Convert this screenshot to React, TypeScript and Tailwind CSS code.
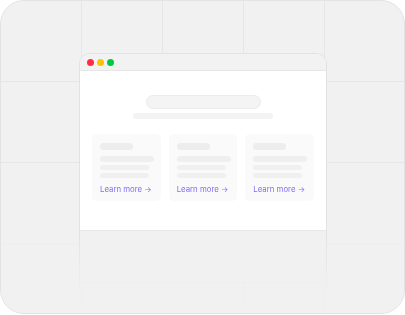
import React from "react";

const cells = Array.from({ length: 20 });

function Card() {
  return (
    <div className="flex h-[67px] flex-col rounded-[5px] bg-[#fafafa] px-[8px] pt-[9px]">
      <div className="h-[7px] w-[33px] rounded-full bg-[#ededed]" />
      <div className="mt-[6px] h-[6px] w-[54px] rounded-full bg-[#efefef]" />
      <div className="mt-[3px] h-[5px] w-[49px] rounded-full bg-[#f0f0f0]" />
      <div className="mt-[3px] h-[5px] w-[49px] rounded-full bg-[#f0f0f0]" />
      <div className="mt-[6px] whitespace-nowrap text-[7.8px] leading-[10px] text-[#7f6ff5] [font-family:Inter,'Noto_Sans',sans-serif]">
        Learn more →
      </div>
    </div>
  );
}

export default function App() {
  return (
    <div className="h-[315px] w-[405px] bg-white">
      <div className="relative h-[314px] w-[405px] overflow-hidden rounded-[24px] border border-[#e3e3e3] bg-[#f1f1f1]">
        <div className="grid grid-cols-[repeat(5,81px)] grid-rows-[repeat(4,81px)]">
          {cells.map((_, i) => (
            <div key={i} className="border-r border-b border-[#e6e6e6]" />
          ))}
        </div>

        <div className="pointer-events-none absolute inset-x-0 bottom-0 h-[95px] bg-gradient-to-b from-[#f1f1f1]/0 from-0% via-[#f1f1f1]/75 via-25% to-[#f1f1f1]/85" />

        <div className="absolute left-[78px] top-[52px] flex h-[262px] w-[248px] flex-col rounded-t-[10px] border border-[#e2e2e2] bg-[#f1f1f1] [mask-image:linear-gradient(to_bottom,black_70%,transparent_92%)]">
          <div className="flex h-[17px] items-center gap-[3px] rounded-t-[10px] border-b border-[#e6e6e6] bg-[#f2f2f2] pl-[7px]">
            <span className="h-[7px] w-[7px] rounded-full bg-[#ff2f40]" />
            <span className="h-[7px] w-[7px] rounded-full bg-[#ffc107]" />
            <span className="h-[7px] w-[7px] rounded-full bg-[#00c843]" />
          </div>
          <div className="flex h-[160px] flex-col items-center border-b border-[#e8e8e8] bg-white px-[12px] pt-[24px]">
            <div className="h-[14px] w-[115px] rounded-full border border-[#ececec] bg-[#f4f4f4]" />
            <div className="mt-[4px] h-[6px] w-[140px] rounded-full bg-[#f3f3f3]" />
            <div className="mt-[15px] grid w-full grid-cols-3 gap-[8px]">
              <Card />
              <Card />
              <Card />
            </div>
          </div>
        </div>
      </div>
    </div>
  );
}
